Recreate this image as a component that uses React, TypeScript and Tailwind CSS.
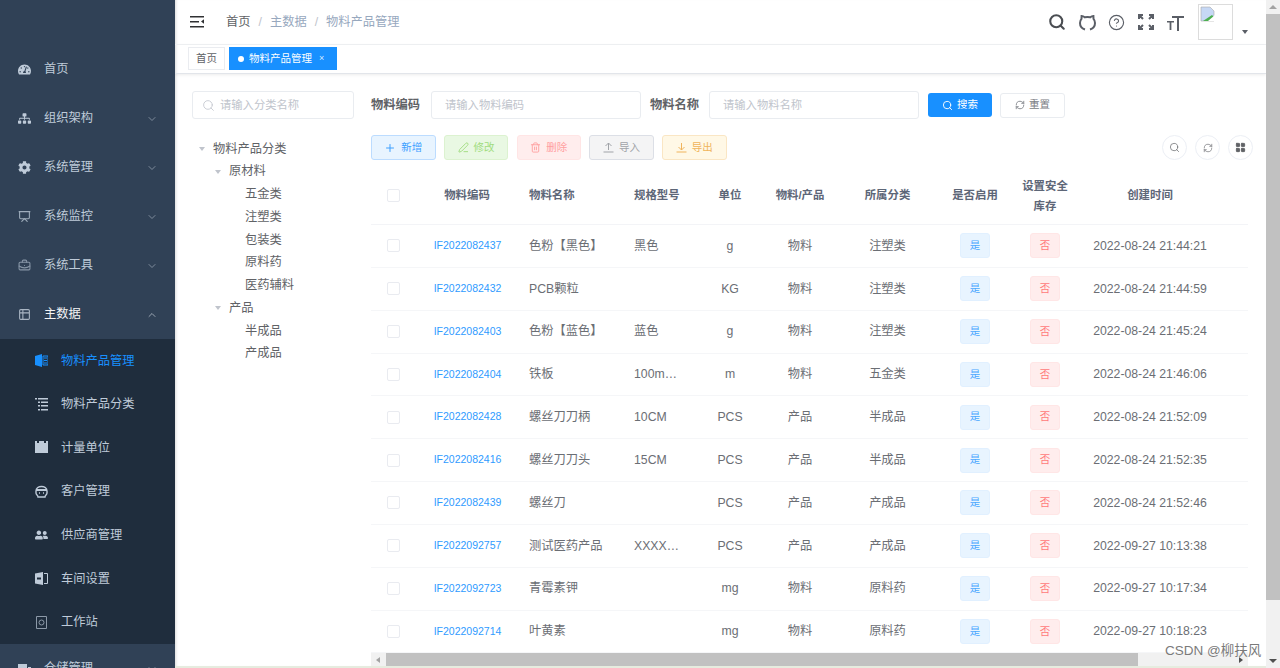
import { ChevronDown, ChevronUp, CircleHelp, PenLine, Plus, RefreshCw, Search, Trash2, Presentation, BriefcaseBusiness, Table2, LayoutGrid } from "lucide-react";
import { FaCog, FaSitemap, FaTachometerAlt, FaUserFriends } from "react-icons/fa";
import { ReactNode } from "react";

const COLS = "grid grid-cols-[44px_104px_105px_71px_70px_70px_105px_70px_70px_140px_28px]";

const rows = [
  ["IF2022082437", "色粉【黑色】", "黑色", "g", "物料", "注塑类", "2022-08-24 21:44:21"],
  ["IF2022082432", "PCB颗粒", "", "KG", "物料", "注塑类", "2022-08-24 21:44:59"],
  ["IF2022082403", "色粉【蓝色】", "蓝色", "g", "物料", "注塑类", "2022-08-24 21:45:24"],
  ["IF2022082404", "铁板", "100m…", "m", "物料", "五金类", "2022-08-24 21:46:06"],
  ["IF2022082428", "螺丝刀刀柄", "10CM", "PCS", "产品", "半成品", "2022-08-24 21:52:09"],
  ["IF2022082416", "螺丝刀刀头", "15CM", "PCS", "产品", "半成品", "2022-08-24 21:52:35"],
  ["IF2022082439", "螺丝刀", "", "PCS", "产品", "产成品", "2022-08-24 21:52:46"],
  ["IF2022092757", "测试医药产品", "XXXX…", "PCS", "产品", "产成品", "2022-09-27 10:13:38"],
  ["IF2022092723", "青霉素钾", "", "mg", "物料", "原料药", "2022-09-27 10:17:34"],
  ["IF2022092714", "叶黄素", "", "mg", "物料", "原料药", "2022-09-27 10:18:23"],
];

function MenuItem({ icon, label, arrow, light }: { icon: ReactNode; label: string; arrow?: "down" | "up"; light?: boolean }) {
  return (
    <div className={`flex h-[49px] shrink-0 items-center pl-[18px] pr-[17px] text-[12.25px] ${light ? "text-[#f4f4f5]" : "text-[#bfcbd9]"}`}>
      <span className="flex w-[13px] justify-center">{icon}</span>
      <span className="ml-[13px] flex-1">{label}</span>
      {arrow === "down" && <ChevronDown size={12} className="text-[#7f8c9c]" />}
      {arrow === "up" && <ChevronUp size={12} className="text-[#9aa5b2]" />}
    </div>
  );
}

function SubItem({ icon, label, active }: { icon: ReactNode; label: string; active?: boolean }) {
  return (
    <div className={`flex h-[43.6px] items-center pl-[35px] text-[12.25px] ${active ? "text-[#1890ff]" : "text-[#bfcbd9]"}`}>
      <span className="flex w-[13px] justify-center">{icon}</span>
      <span className="ml-[13px]">{label}</span>
    </div>
  );
}

function Sidebar() {
  return (
    <aside className="z-10 flex h-full w-[175px] shrink-0 flex-col overflow-hidden bg-[#304156] pt-[45px]">
      <MenuItem icon={<FaTachometerAlt size={13} />} label="首页" />
      <MenuItem icon={<FaSitemap size={13} />} label="组织架构" arrow="down" />
      <MenuItem icon={<FaCog size={13} />} label="系统管理" arrow="down" />
      <MenuItem icon={<Presentation size={13} className="text-[#9fadbc]" />} label="系统监控" arrow="down" />
      <MenuItem icon={<BriefcaseBusiness size={13} className="text-[#8695a6]" />} label="系统工具" arrow="down" />
      <MenuItem icon={<Table2 size={13} className="text-[#a9b5c3]" />} label="主数据" arrow="up" light />
      <div className="shrink-0 bg-[#1f2d3d]">
        <SubItem
          active
          label="物料产品管理"
          icon={
            <svg width="13" height="13" viewBox="0 0 13 13">
              <path d="M0 2 7 0v13L0 11z" fill="#1890ff" />
              <path d="M8 2h5v9H8zM9 4h3M9 6.5h3M9 9h3" stroke="#1890ff" fill="none" strokeWidth="1" />
            </svg>
          }
        />
        <SubItem
          label="物料产品分类"
          icon={
            <svg width="13" height="13" viewBox="0 0 13 13" fill="#bfcbd9">
              <path d="M0 0h2v1.5H0zM3 0h10v1.5H3zM3 3.5h2V5H3zM6 3.5h7V5H6zM3 7h2v1.5H3zM6 7h7v1.5H6zM3 11h2v1.5H3zM6 11h7v1.5H6z" />
            </svg>
          }
        />
        <SubItem
          label="计量单位"
          icon={
            <svg width="13" height="13" viewBox="0 0 13 13" fill="#bfcbd9">
              <path d="M0 0h2v2h2V0h5v2h2V0h2v12H0z" />
            </svg>
          }
        />
        <SubItem
          label="客户管理"
          icon={
            <svg width="13" height="13" viewBox="0 0 13 13" fill="none" stroke="#bfcbd9" strokeWidth="1.4">
              <path d="M1 6c0-6 11-6 11 0v2c0 2-2 2-2 4H3c0-2-2-2-2-4z" />
              <path d="M1 5h11" strokeWidth="2" />
              <path d="M4 8h1M8 8h1" />
            </svg>
          }
        />
        <SubItem icon={<FaUserFriends size={14} />} label="供应商管理" />
        <SubItem
          label="车间设置"
          icon={
            <svg width="13" height="13" viewBox="0 0 13 13">
              <path d="M0 1.5 8 0v13l-8-1.5z" fill="#bfcbd9" />
              <path d="M9 1.5h3.5v10H9" fill="none" stroke="#bfcbd9" />
              <path d="M2 5.5h4v2H2z" fill="#1f2d3d" />
            </svg>
          }
        />
        <SubItem
          label="工作站"
          icon={
            <svg width="13" height="13" viewBox="0 0 13 13" fill="none" stroke="#8c99a8" strokeWidth="1">
              <path d="M1.5.5h10v12h-10z" />
              <circle cx="6.5" cy="6.5" r="2.5" />
            </svg>
          }
        />
      </div>
      <MenuItem
        label="仓储管理"
        arrow="down"
        icon={
          <svg width="13" height="13" viewBox="0 0 13 13" fill="#bfcbd9">
            <path d="M0 2h9v11H0zM10 5h3v8h-3z" />
          </svg>
        }
      />
    </aside>
  );
}

function Header() {
  return (
    <header className="flex h-[45px] shrink-0 items-center border-b border-[#f0f2f4] pl-[15px] text-[#5a5e66]">
      <svg width="15" height="14" viewBox="0 0 15 14" fill="#303133">
        <path d="M0 1h14v1.5H0zM0 6h9v1.5H0zM0 11h14v1.5H0zM14 4.2v4.6L11 6.5z" />
      </svg>
      <nav className="ml-[21px] flex items-center text-[12.25px]">
        <span className="text-[#606266]">首页</span>
        <span className="mx-[8px] text-[#c0c4cc]">/</span>
        <span className="text-[#97a8be]">主数据</span>
        <span className="mx-[8px] text-[#c0c4cc]">/</span>
        <span className="text-[#97a8be]">物料产品管理</span>
      </nav>
      <div className="ml-auto flex items-center">
        <Search size={18} strokeWidth={2.8} className="text-[#4a4d52]" />
        <svg width="17" height="17" viewBox="0 0 17 17" fill="none" stroke="#5a5e66" strokeWidth="2" className="ml-[13px]">
          <path d="M6 15.5C3 14.5 1 12 1 9c0-2 .6-3.2 1.5-4.2L2.6 2c1 0 2.2.5 3.2 1.3 1.6-.4 3.8-.4 5.4 0C12.200 2.500 13.400 2 14.400 2l.1 2.800C15.400 5.800 16 7 16 9c0 3-2 5.500-5 6.500" />
        </svg>
        <CircleHelp size={17} strokeWidth={1.6} className="ml-[12px]" />
        <svg width="16" height="16" viewBox="0 0 16 16" fill="none" stroke="#5a5e66" strokeWidth="2" className="ml-[13px]">
          <path d="M1 5V1h4M1 1l4 4M11 1h4v4M15 1l-4 4M1 11v4h4M1 15l4-4M15 11v4h-4M15 15l-4-4" />
        </svg>
        <svg width="17" height="17" viewBox="0 0 17 17" fill="#5a5e66" className="ml-[13px]">
          <path d="M5 2h12v2h-5v13h-2V4H5zM0 7h7v1.6H4.400V16H2.600V8.600H0z" />
        </svg>
        <div className="ml-[14px] flex h-[36px] w-[35px] items-start border border-[#dcdcdc]">
          <svg width="16" height="16" viewBox="0 0 16 16" className="mt-[1px] ml-[1px]">
            <path d="M1 1h9l4 4v10H1z" fill="#c6d8f5" stroke="#a9a9a9" strokeWidth="0.6" />
            <path d="M3 15l9-6 3 3v3z" fill="#4caf50" />
            <path d="M8 15 15 9v6z" fill="#fff" />
          </svg>
        </div>
        <svg width="6" height="4" viewBox="0 0 6 4" className="mr-[18px] ml-[9px] mt-[20px]" fill="#5a5e66">
          <path d="M0 0h6L3 4z" />
        </svg>
      </div>
    </header>
  );
}

function Tabs() {
  return (
    <div className="flex h-[29px] shrink-0 items-start gap-[4px] border-b border-[#e2e5ea] pl-[13px] pt-[2px] shadow-[0_1px_3px_rgba(0,0,0,0.08)]">
      <div className="flex h-[23px] w-[37px] items-center justify-center border border-[#eaecf0] text-[10.5px] text-[#606266]">首页</div>
      <div className="flex h-[23px] w-[108px] items-center border border-[#1890ff] bg-[#1890ff] pl-[8px] text-[10.5px] text-white">
        <span className="h-[6px] w-[6px] rounded-full bg-white" />
        <span className="ml-[5px]">物料产品管理</span>
        <span className="ml-[7px] text-[9px] text-[#d5e9ff]">×</span>
      </div>
    </div>
  );
}

function TreeLine({ label, level, open }: { label: string; level: number; open?: boolean }) {
  const pad = level === 0 ? "pl-[7px]" : level === 1 ? "pl-[23px]" : "pl-[53px]";
  return (
    <div className={`flex h-[22.75px] items-center text-[12.25px] text-[#606266] ${pad}`}>
      {open && <span className="mr-[8px] h-0 w-0 border-x-[3.5px] border-t-[4px] border-x-transparent border-t-[#c0c4cc]" />}
      <span>{label}</span>
    </div>
  );
}

function TreePanel() {
  return (
    <div className="ml-[17px] w-[162px] shrink-0">
      <div className="flex h-[28px] items-center rounded-[3px] border border-[#e9ecf0] pl-[9px] text-[11.3px] text-[#c0c4cc]">
        <Search size={13} strokeWidth={1.5} />
        <span className="ml-[5px]">请输入分类名称</span>
      </div>
      <div className="mt-[18.5px]">
        <TreeLine label="物料产品分类" level={0} open />
        <TreeLine label="原材料" level={1} open />
        <TreeLine label="五金类" level={2} />
        <TreeLine label="注塑类" level={2} />
        <TreeLine label="包装类" level={2} />
        <TreeLine label="原料药" level={2} />
        <TreeLine label="医药辅料" level={2} />
        <TreeLine label="产品" level={1} open />
        <TreeLine label="半成品" level={2} />
        <TreeLine label="产成品" level={2} />
      </div>
    </div>
  );
}

function Action({ icon, label, cls }: { icon: ReactNode; label: string; cls: string }) {
  return (
    <div className={`flex h-[25px] w-[64.5px] items-center justify-center gap-[5px] rounded-[3px] border text-[10.5px] ${cls}`}>
      {icon}
      <span>{label}</span>
    </div>
  );
}

function CircleBtn({ children }: { children: ReactNode }) {
  return <div className="flex h-[25px] w-[25px] items-center justify-center rounded-full border border-[#eceff5] text-[#606266]">{children}</div>;
}

function Checkbox() {
  return <span className="mx-auto h-[13px] w-[13px] rounded-[2px] border border-[#e9ebf0] bg-white" />;
}

function DataTable() {
  return (
    <div className="mt-[13px] w-[877px] overflow-hidden">
      <div className={`${COLS} h-[52px] items-center border-b border-[#f3f4f7] pb-[6px] text-center text-[11.4px] font-semibold text-[#5d6677]`}>
        <Checkbox />
        <div>物料编码</div>
        <div className="pl-[10px] text-left">物料名称</div>
        <div className="pl-[10px] text-left">规格型号</div>
        <div>单位</div>
        <div>物料/产品</div>
        <div>所属分类</div>
        <div>是否启用</div>
        <div className="leading-[20px]">
          设置安全
          <br />
          库存
        </div>
        <div>创建时间</div>
      </div>
      {rows.map((r) => (
        <div key={r[0]} className={`${COLS} h-[42.85px] items-center border-b border-[#f5f6f8] text-center text-[12.25px] text-[#6b6e74]`}>
          <Checkbox />
          <div className="pl-[1px] text-[10.5px] text-[#2f9bff]">{r[0]}</div>
          <div className="pl-[10px] text-left">{r[1]}</div>
          <div className="pl-[10px] text-left">{r[2]}</div>
          <div>{r[3]}</div>
          <div>{r[4]}</div>
          <div>{r[5]}</div>
          <div className="flex justify-center">
            <span className="flex h-[25px] w-[30px] items-center justify-center rounded-[3px] border border-[#e1f0ff] bg-[#e8f4ff] text-[10.5px] text-[#4aa8ff]">是</span>
          </div>
          <div className="flex justify-center">
            <span className="flex h-[25px] w-[30px] items-center justify-center rounded-[3px] border border-[#ffe6e6] bg-[#ffeded] text-[10.5px] text-[#ff7a7a]">否</span>
          </div>
          <div>{r[6]}</div>
        </div>
      ))}
    </div>
  );
}

function TablePanel() {
  return (
    <div className="ml-[17px] flex w-[882px] flex-col">
      <div className="flex h-[28px] items-center text-[12.25px]">
        <span className="font-bold text-[#606266]">物料编码</span>
        <div className="ml-[11px] flex h-[28px] w-[210px] items-center rounded-[3px] border border-[#e9ecf0] pl-[13px] text-[11.3px] text-[#c0c4cc]">请输入物料编码</div>
        <span className="ml-[9px] font-bold text-[#606266]">物料名称</span>
        <div className="ml-[10px] flex h-[28px] w-[210px] items-center rounded-[3px] border border-[#e9ecf0] pl-[13px] text-[11.3px] text-[#c0c4cc]">请输入物料名称</div>
        <div className="ml-[9px] flex h-[24px] w-[64px] items-center justify-center gap-[4px] rounded-[3px] bg-[#1890ff] text-[10.5px] text-white">
          <Search size={11} />
          <span>搜索</span>
        </div>
        <div className="ml-[8px] flex h-[25px] w-[65px] items-center justify-center gap-[4px] rounded-[3px] border border-[#e9ecf0] text-[10.5px] text-[#7a7d83]">
          <RefreshCw size={10} />
          <span>重置</span>
        </div>
      </div>
      <div className="mt-[16px] flex h-[25px] items-center gap-[8.25px]">
        <Action icon={<Plus size={12} />} label="新增" cls="border-[#bcdcff] bg-[#e8f4ff] text-[#3ea0ff]" />
        <Action icon={<PenLine size={11} />} label="修改" cls="border-[#dcf2d0] bg-[#e9f8e3] text-[#a0dc7e]" />
        <Action icon={<Trash2 size={11} />} label="删除" cls="border-[#ffe5e5] bg-[#ffeded] text-[#ffa0a0]" />
        <Action
          label="导入"
          cls="border-[#dcdfe6] bg-[#f4f4f5] text-[#a0a3a8]"
          icon={
            <svg width="11" height="11" viewBox="0 0 11 11" fill="none" stroke="currentColor">
              <path d="M5.500 1v7M2.500 4l3-3 3 3M0.500 10h10" />
            </svg>
          }
        />
        <Action
          label="导出"
          cls="border-[#fae6c4] bg-[#fff8e6] text-[#f0b45c]"
          icon={
            <svg width="11" height="11" viewBox="0 0 11 11" fill="none" stroke="currentColor">
              <path d="M5.500 1v7M2.500 5l3 3 3-3M0.500 10h10" />
            </svg>
          }
        />
        <div className="ml-auto flex items-center gap-[8px]">
          <CircleBtn>
            <Search size={11} strokeWidth={1.5} />
          </CircleBtn>
          <CircleBtn>
            <RefreshCw size={10} strokeWidth={1.5} />
          </CircleBtn>
          <CircleBtn>
            <LayoutGrid size={11} fill="currentColor" />
          </CircleBtn>
        </div>
      </div>
      <DataTable />
      <div className="relative flex h-[13px] w-[877px] shrink-0 items-center bg-[#f1f1f1]">
        <span className="ml-[5px] h-0 w-0 border-y-[3.5px] border-r-[4px] border-y-transparent border-r-[#a3a3a3]" />
        <div className="ml-[6px] h-[13px] w-[752px] bg-[#c1c1c1]" />
        <span className="ml-auto mr-[5px] h-0 w-0 border-y-[3.5px] border-l-[4px] border-y-transparent border-l-[#505050]" />
      </div>
    </div>
  );
}

function ScrollBar() {
  return (
    <div className="flex h-full w-[14px] shrink-0 flex-col items-center bg-[#f1f1f1]">
      <span className="mt-[5px] h-0 w-0 border-x-[4px] border-b-[4px] border-x-transparent border-b-[#a3a3a3]" />
      <div className="mt-[5px] h-[586px] w-full bg-[#c1c1c1]" />
      <span className="mt-auto mb-[5px] h-0 w-0 border-x-[4px] border-t-[4px] border-x-transparent border-t-[#505050]" />
    </div>
  );
}

export default function App() {
  return (
    <div className="relative flex h-[668px] w-[1280px] overflow-hidden bg-white [font-family:'Liberation_Sans','Noto_Sans_CJK_SC',sans-serif]">
      <Sidebar />
      <main className="flex h-full min-w-0 flex-1 flex-col border-b-2 border-[#e6ecdf] shadow-[inset_3px_0_3px_-2px_rgba(0,0,0,0.15)]">
        <Header />
        <Tabs />
        <div className="flex flex-1 overflow-hidden pt-[17px]">
          <TreePanel />
          <TablePanel />
        </div>
      </main>
      <ScrollBar />
      <span className="absolute top-[641px] left-[1165px] text-[13.5px] text-[#7a7a7a] [text-shadow:0_0_1px_#fff]">CSDN @柳扶风</span>
    </div>
  );
}
